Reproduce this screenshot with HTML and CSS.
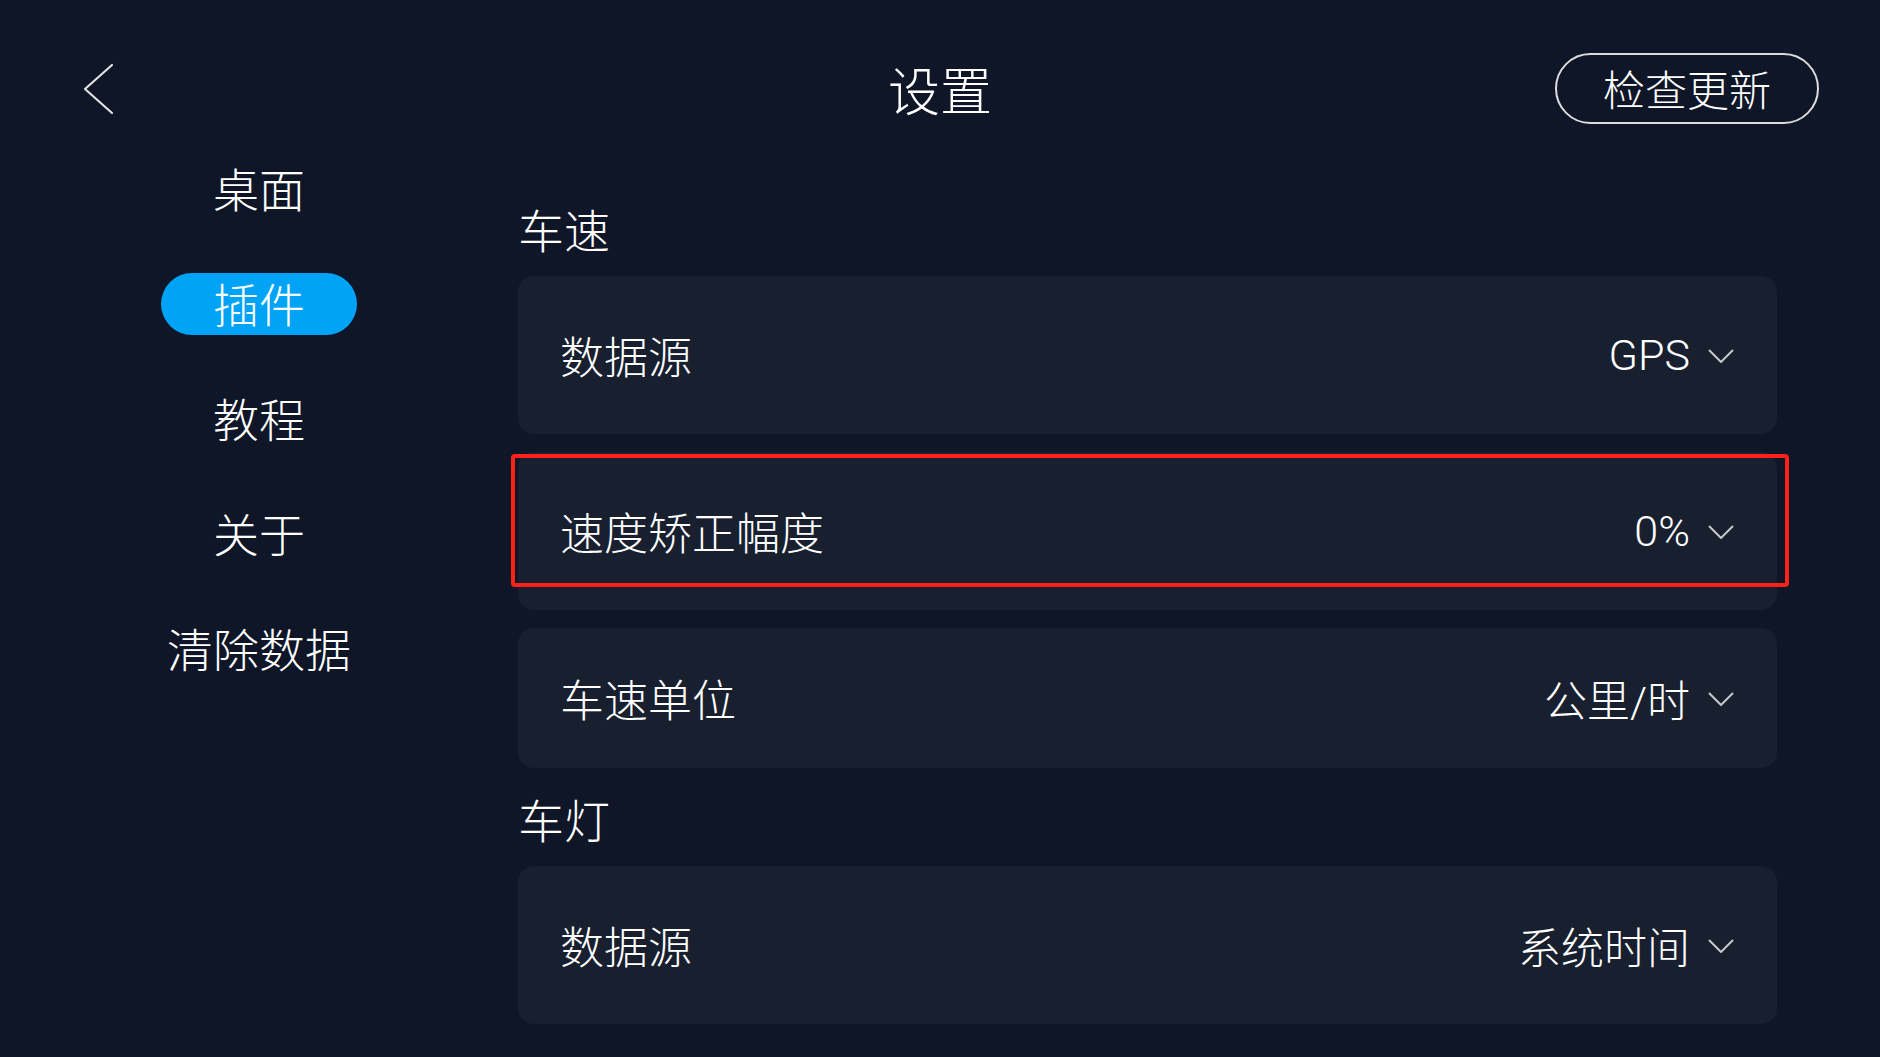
FILE: index.html
```html
<!DOCTYPE html>
<html lang="zh-CN">
<head>
  <meta charset="UTF-8">
  <meta name="viewport" content="width=device-width, initial-scale=1.0">
  <title>设置</title>
  <link rel="stylesheet" href="styles.css">
</head>
<body>
  <header class="topbar">
    <button class="back" aria-label="返回">
      <svg width="32" height="52" viewBox="0 0 32 52"><polyline points="30,2 3,26 30,50" fill="none" stroke="#e2e2e2" stroke-width="2.2" stroke-linecap="round" stroke-linejoin="round"/></svg>
    </button>
    <h1 class="title">设置</h1>
    <div class="topbar-right">
      <button class="update-btn">检查更新</button>
    </div>
  </header>

  <div class="main">
    <nav class="sidebar">
      <a class="nav-item">桌面</a>
      <a class="nav-item active">插件</a>
      <a class="nav-item">教程</a>
      <a class="nav-item">关于</a>
      <a class="nav-item">清除数据</a>
    </nav>

    <section class="content">
      <h2 class="section-title">车速</h2>
      <div class="group">
        <div class="row">
          <span class="label">数据源</span>
          <span class="value">GPS
            <svg class="chev" width="26" height="14" viewBox="0 0 26 14"><polyline points="1,1 13,13 25,1" fill="none" stroke="#c6c8cc" stroke-width="2"/></svg>
          </span>
        </div>
        <div class="row marked">
          <span class="label">速度矫正幅度</span>
          <span class="value">0%
            <svg class="chev" width="26" height="14" viewBox="0 0 26 14"><polyline points="1,1 13,13 25,1" fill="none" stroke="#c6c8cc" stroke-width="2"/></svg>
          </span>
          <div class="annot"></div>
        </div>
        <div class="row short">
          <span class="label">车速单位</span>
          <span class="value">公里/时
            <svg class="chev" width="26" height="14" viewBox="0 0 26 14"><polyline points="1,1 13,13 25,1" fill="none" stroke="#c6c8cc" stroke-width="2"/></svg>
          </span>
        </div>
      </div>

      <h2 class="section-title second">车灯</h2>
      <div class="group">
        <div class="row">
          <span class="label">数据源</span>
          <span class="value">系统时间
            <svg class="chev" width="26" height="14" viewBox="0 0 26 14"><polyline points="1,1 13,13 25,1" fill="none" stroke="#c6c8cc" stroke-width="2"/></svg>
          </span>
        </div>
      </div>
    </section>
  </div>
</body>
</html>
```

FILE: styles.css
```css
html, body {
  margin: 0;
  padding: 0;
}
body {
  width: 1880px;
  height: 1057px;
  overflow: hidden;
  background-color: #0e1627;
  color: #fff;
  font-family: Roboto, "Noto Sans CJK SC", sans-serif;
}

/* top bar */
.topbar {
  display: grid;
  grid-template-columns: 1fr auto 1fr;
  align-items: center;
  padding-top: 53px;
  height: 71px;
}
.back {
  justify-self: start;
  margin-left: 82px;
  padding: 0;
  border: none;
  background: none;
  display: flex;
}
.title {
  margin: 0;
  font-size: 52px;
  font-weight: 300;
  line-height: 69px;
  font-family: "Noto Sans CJK SC", sans-serif;
}
.topbar-right {
  justify-self: end;
  margin-right: 61px;
}
.update-btn {
  width: 264px;
  height: 71px;
  border: 2px solid #dcdcdc;
  border-radius: 36px;
  background: transparent;
  color: #fff;
  font-family: "Noto Sans CJK SC", sans-serif;
  font-size: 42px;
  font-weight: 300;
  padding: 0 0 3px;
}

/* layout */
.main {
  display: flex;
}
.sidebar {
  width: 518px;
  padding-top: 34px;
  display: flex;
  flex-direction: column;
  align-items: center;
  gap: 53px;
}
.nav-item {
  width: 196px;
  height: 62px;
  line-height: 58px;
  border-radius: 31px;
  text-align: center;
  font-family: "Noto Sans CJK SC", sans-serif;
  font-size: 46px;
  font-weight: 300;
  white-space: nowrap;
}
.nav-item.active {
  background-color: #00a3f6;
}

.content {
  width: 1259px;
  padding-top: 74px;
  display: flex;
  flex-direction: column;
}
.section-title {
  margin: 0 0 16px;
  font-size: 46px;
  font-weight: 300;
  line-height: 60px;
  height: 62px;
  font-family: "Noto Sans CJK SC", sans-serif;
}
.section-title.second {
  margin-top: 20px;
}
.group {
  display: flex;
  flex-direction: column;
  gap: 18px;
}
.row {
  position: relative;
  height: 158px;
  padding: 0 43px 0 42px;
  background-color: #182030;
  border-radius: 16px;
  display: flex;
  align-items: center;
  justify-content: space-between;
}
.row.short {
  height: 140px;
}
.label {
  font-family: "Noto Sans CJK SC", sans-serif;
  font-size: 44px;
  font-weight: 300;
}
.value {
  display: flex;
  align-items: center;
  gap: 18px;
  font-size: 43px;
  font-weight: 300;
}
.chev {
  margin-top: 2px;
}

/* red highlight drawn over the second row */
.annot {
  position: absolute;
  left: -7px;
  top: 2px;
  width: 1278px;
  height: 133px;
  box-sizing: border-box;
  border: 4px solid #ff2219;
  border-radius: 4px;
}
```
